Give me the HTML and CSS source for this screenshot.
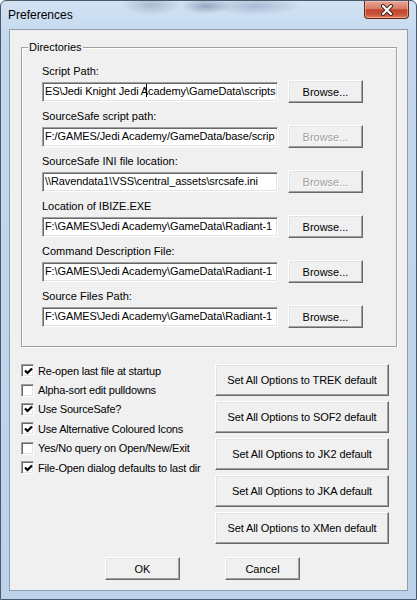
FILE: index.html
```html
<!DOCTYPE html>
<html lang="en">
<head>
    <meta charset="UTF-8">
    <meta name="viewport" content="width=device-width, initial-scale=1.0">
    <title>Preferences</title>
    <link rel="stylesheet" href="styles.css">
</head>
<body>
<div class="window">
    <div class="titlebar">
        <span class="title">Preferences</span>
        <div class="closeBtn">
            <svg width="14" height="12" viewBox="0 0 14 12">
                <path d="M3 2 L11 10 M11 2 L3 10" stroke="#3a2420" stroke-width="4" stroke-linecap="round"/>
                <path d="M3 2 L11 10 M11 2 L3 10" stroke="#fff" stroke-width="2.2" stroke-linecap="round"/>
            </svg>
        </div>
    </div>

    <div class="client">
        <fieldset class="group">
            <legend>Directories</legend>

            <div class="pathRow">
                <div class="label">Script Path:</div>
                <div class="controls">
                    <div class="edit">ES\Jedi Knight Jedi A<span class="caret"></span>cademy\GameData\scripts</div>
                    <div class="btn browse">Browse...</div>
                </div>
            </div>
            <div class="pathRow">
                <div class="label">SourceSafe script path:</div>
                <div class="controls">
                    <div class="edit">F:/GAMES/Jedi Academy/GameData/base/scrip</div>
                    <div class="btn browse disabled">Browse...</div>
                </div>
            </div>
            <div class="pathRow">
                <div class="label">SourceSafe INI file location:</div>
                <div class="controls">
                    <div class="edit">\\Ravendata1\VSS\central_assets\srcsafe.ini</div>
                    <div class="btn browse disabled">Browse...</div>
                </div>
            </div>
            <div class="pathRow">
                <div class="label">Location of IBIZE.EXE</div>
                <div class="controls">
                    <div class="edit">F:\GAMES\Jedi Academy\GameData\Radiant-1</div>
                    <div class="btn browse">Browse...</div>
                </div>
            </div>
            <div class="pathRow">
                <div class="label">Command Description File:</div>
                <div class="controls">
                    <div class="edit">F:\GAMES\Jedi Academy\GameData\Radiant-1</div>
                    <div class="btn browse">Browse...</div>
                </div>
            </div>
            <div class="pathRow last">
                <div class="label">Source Files Path:</div>
                <div class="controls">
                    <div class="edit">F:\GAMES\Jedi Academy\GameData\Radiant-1</div>
                    <div class="btn browse">Browse...</div>
                </div>
            </div>
        </fieldset>

        <div class="options">
            <div class="checks">
                <div class="check on"><span class="box"><svg width="9" height="9" viewBox="0 0 9 9"><polyline points="1,3.5 3.5,6 8,1.5" fill="none" stroke="#000" stroke-width="2.2"/></svg></span>Re-open last file at startup</div>
                <div class="check"><span class="box"></span>Alpha-sort edit pulldowns</div>
                <div class="check on"><span class="box"><svg width="9" height="9" viewBox="0 0 9 9"><polyline points="1,3.5 3.5,6 8,1.5" fill="none" stroke="#000" stroke-width="2.2"/></svg></span>Use SourceSafe?</div>
                <div class="check on"><span class="box"><svg width="9" height="9" viewBox="0 0 9 9"><polyline points="1,3.5 3.5,6 8,1.5" fill="none" stroke="#000" stroke-width="2.2"/></svg></span>Use Alternative Coloured Icons</div>
                <div class="check"><span class="box"></span>Yes/No query on Open/New/Exit</div>
                <div class="check on"><span class="box"><svg width="9" height="9" viewBox="0 0 9 9"><polyline points="1,3.5 3.5,6 8,1.5" fill="none" stroke="#000" stroke-width="2.2"/></svg></span>File-Open dialog defaults to last dir</div>
            </div>
            <div class="presets">
                <div class="btn preset">Set All Options to TREK default</div>
                <div class="btn preset">Set All Options to SOF2 default</div>
                <div class="btn preset">Set All Options to JK2 default</div>
                <div class="btn preset">Set All Options to JKA default</div>
                <div class="btn preset">Set All Options to XMen default</div>
            </div>
        </div>

        <div class="footer">
            <div class="btn dlgBtn">OK</div>
            <div class="btn dlgBtn">Cancel</div>
        </div>
    </div>
</div>
</body>
</html>
```

FILE: styles.css
```css
body{
    margin: 0;
    background-color: #fff;
    font-family: "Liberation Sans", Arial, Helvetica, sans-serif;
    font-size: 11px;
    color: #000;
}
.window{
    width: 417px;
    height: 600px;
    box-sizing: border-box;
    padding: 0 8px 8px 8px;
    border: 1px solid #4a5868;
    border-radius: 6px 6px 0 0;
    background:
        radial-gradient(ellipse 30px 10px at 150px 4px, rgba(120,140,165,0.45), transparent),
        radial-gradient(ellipse 25px 8px at 205px 5px, rgba(90,110,140,0.5), transparent),
        radial-gradient(ellipse 45px 9px at 255px 5px, rgba(120,140,170,0.45), transparent),
        linear-gradient(#d2e2f3, #c3d8ee 40px, #bcd2ea);
    display: flex;
    flex-direction: column;
}
.titlebar{
    height: 28px;
    display: flex;
    align-items: flex-start;
}
.title{
    font-size: 12px;
    line-height: 15px;
    padding-top: 7px;
    margin-left: -1px;
}
.closeBtn{
    margin-left: auto;
    margin-right: -1px;
    width: 43px;
    height: 17px;
    border: 1px solid #6d2418;
    border-top: none;
    border-radius: 0 0 4px 4px;
    background: linear-gradient(#e8a899, #d87a66 45%, #c4432c 52%, #c9543a 80%, #dc8462);
    box-shadow: inset 0 0 0 1px rgba(255,210,200,0.45);
    display: flex;
    align-items: center;
    justify-content: center;
}
.client{
    flex: 1;
    background-color: #f0f0f0;
    border: 1px solid #8b9db1;
    padding-top: 11px;
}
.group{
    margin: 0 10px 0 11px;
    padding: 11px 10px 18px 20px;
    border: 1px solid #a0a0a0;
    box-shadow: inset 1px 1px 0 #fff, 1px 1px 0 #fff;
    min-width: 0;
}
.group legend{
    margin-left: -14px;
    padding: 0 1px;
    line-height: 13px;
    background-color: #f0f0f0;
}
.pathRow{
    margin-bottom: 7px;
}
.pathRow.last{
    margin-top: 2px;
    margin-bottom: 0;
}
.label{
    line-height: 13px;
    margin-bottom: 2px;
    white-space: nowrap;
}
.controls{
    display: flex;
    align-items: center;
    height: 23px;
}
.edit{
    width: 236px;
    height: 20px;
    box-sizing: border-box;
    padding: 0 2px;
    line-height: 17px;
    letter-spacing: -0.1px;
    background-color: #fff;
    border-top: 1px solid #a0a0a0;
    border-left: 1px solid #a0a0a0;
    border-bottom: 1px solid #fff;
    border-right: 1px solid #fff;
    box-shadow: inset 1px 1px 0 #696969, inset -1px -1px 0 #e3e3e3;
    white-space: nowrap;
    overflow: hidden;
}
.caret{
    display: inline-block;
    width: 0;
    height: 13px;
    border-left: 1px solid #000;
    margin-left: -2px;
    margin-right: 1px;
    vertical-align: -2px;
}
.btn{
    box-sizing: border-box;
    background-color: #f0f0f0;
    border: 1px solid;
    border-color: #fff #696969 #696969 #fff;
    box-shadow: inset -1px -1px 0 #a0a0a0, inset 1px 1px 0 #e3e3e3;
    display: flex;
    align-items: center;
    justify-content: center;
    white-space: nowrap;
}
.browse{
    width: 75px;
    height: 23px;
    margin-left: 10px;
}
.disabled{
    color: #a0a0a0;
    text-shadow: 1px 1px 0 #fff;
}
.options{
    display: flex;
    gap: 14px;
    margin-top: 13px;
    padding-left: 11px;
}
.checks{
    width: 180px;
    padding-top: 1px;
    letter-spacing: -0.2px;
    overflow: hidden;
}
.check{
    height: 19.4px;
    display: flex;
    align-items: center;
    white-space: nowrap;
}
.box{
    flex: none;
    width: 13px;
    height: 13px;
    box-sizing: border-box;
    margin-right: 4px;
    background-color: #fff;
    border-top: 1px solid #a0a0a0;
    border-left: 1px solid #a0a0a0;
    border-bottom: 1px solid #fff;
    border-right: 1px solid #fff;
    box-shadow: inset 1px 1px 0 #696969, inset -1px -1px 0 #e3e3e3;
    display: flex;
    align-items: center;
    justify-content: center;
}
.box svg{
    margin: 1px 0 0 1px;
}
.presets{
    display: flex;
    flex-direction: column;
    gap: 5px;
    padding-top: 4px;
    letter-spacing: -0.1px;
}
.preset{
    width: 174px;
    height: 32px;
}
.footer{
    display: flex;
    gap: 45px;
    margin-top: 13px;
    padding-left: 95px;
}
.dlgBtn{
    width: 75px;
    height: 23px;
}
```
